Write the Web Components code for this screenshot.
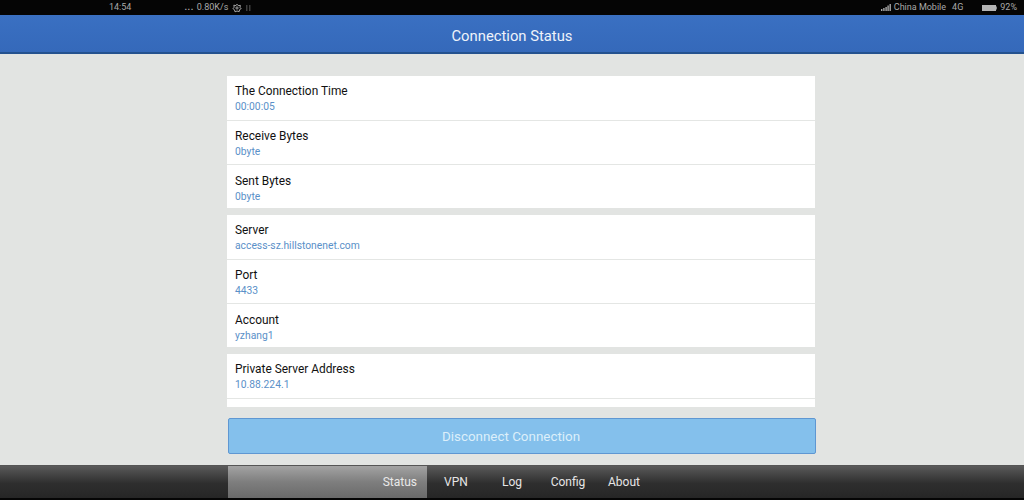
<!DOCTYPE html>
<html>
<head>
<meta charset="utf-8">
<title>Connection Status</title>
<style>
html, body { margin: 0; padding: 0; height: 500px; overflow: hidden; background: #e2e4e2; font-family: Roboto, "Liberation Sans", sans-serif; }
vpn-app { width: 1024px; height: 500px; }
</style>
</head>
<body>
<vpn-app>
  <status-bar></status-bar>
  <title-bar>Connection Status</title-bar>
  <main-pane>
    <info-group>
      <info-row label="The Connection Time" value="00:00:05"></info-row>
      <info-row label="Receive Bytes" value="0byte"></info-row>
      <info-row label="Sent Bytes" value="0byte"></info-row>
    </info-group>
    <info-group>
      <info-row label="Server" value="access-sz.hillstonenet.com"></info-row>
      <info-row label="Port" value="4433"></info-row>
      <info-row label="Account" value="yzhang1"></info-row>
    </info-group>
    <info-group>
      <info-row label="Private Server Address" value="10.88.224.1"></info-row>
      <info-row label="" value=""></info-row>
    </info-group>
    <big-button slot="action">Disconnect Connection</big-button>
  </main-pane>
  <tab-bar></tab-bar>
</vpn-app>
<script>
// app frame
class VpnApp extends HTMLElement {
  constructor() {
    super();
    this.attachShadow({mode: 'open'}).innerHTML = `<style>
      :host { display: flex; flex-direction: column; }
    </style><slot></slot>`;
  }
}
customElements.define('vpn-app', VpnApp);

class StatusBar extends HTMLElement {
  constructor() {
    super();
    this.attachShadow({mode: 'open'}).innerHTML = `<style>
      :host { display: flex; align-items: center; height: 15px; flex: none; background: #050505; color: #a9a9a9;
        font: 9px/15px Roboto, sans-serif; padding: 0 7px 0 109px; box-sizing: border-box; }
      .dots { margin-left: 53px; letter-spacing: 0.5px; font-weight: bold; }
      .speed { margin-left: 3px; }
      svg { display: block; flex: none; }
      .gear { margin-left: 4px; }
      .usb { margin-left: 4px; }
      .right { margin-left: auto; display: flex; align-items: center; }
      .carrier { margin-left: 3px; }
      .net { margin-left: 6px; }
      .batt { margin-left: 19px; }
      .pct { margin-left: 3px; }
    </style>
    <span>14:54</span>
    <span class="dots">...</span><span class="speed">0.80K/s</span>
    <svg class="gear" width="10" height="10" viewBox="0 0 10 10" fill="none" stroke="#a9a9a9" stroke-width="1"><path d="M5 1.2 6.2 2.6 8.4 2.4 8 4.4 9.2 5.6 7.6 6.6 7.2 8.6 5 8 3 8.8 2.5 6.8 .9 5.6 2.2 4.2 1.8 2.2 3.9 2.6Z"/><circle cx="5" cy="5" r="1.1"/></svg>
    <svg class="usb" width="5" height="8" viewBox="0 0 5 8" fill="#3d3d3d"><rect x="0" y="1" width="1.5" height="6"/><rect x="3" y="1" width="1.5" height="6"/></svg>
    <div class="right">
      <svg width="10" height="7" viewBox="0 0 10 7" fill="#a9a9a9"><rect x="0" y="5" width="1.4" height="2"/><rect x="2.2" y="4" width="1.4" height="3"/><rect x="4.4" y="3" width="1.4" height="4"/><rect x="6.4" y="1.5" width="1.4" height="5.5"/><rect x="8.5" y="0" width="1.4" height="7"/></svg>
      <span class="carrier">China Mobile</span><span class="net">4G</span>
      <svg class="batt" width="15" height="6" viewBox="0 0 15 6"><rect width="14" height="6" fill="#b4b4b4"/><rect x="14" y="1.5" width="1" height="3" fill="#888"/></svg>
      <span class="pct">92%</span>
    </div>`;
  }
}
customElements.define('status-bar', StatusBar);

class TitleBar extends HTMLElement {
  constructor() {
    super();
    this.attachShadow({mode: 'open'}).innerHTML = `<style>
      :host { display: flex; align-items: center; justify-content: center; flex: none; height: 39px; box-sizing: border-box;
        background: linear-gradient(#3a70c2, #3569ba); border-bottom: 2px solid #24528f; color: #eef3fa;
        font: 14.8px Roboto, sans-serif; padding-top: 4px; }
    </style><slot></slot>`;
  }
}
customElements.define('title-bar', TitleBar);

class MainPane extends HTMLElement {
  constructor() {
    super();
    this.attachShadow({mode: 'open'}).innerHTML = `<style>
      :host { display: flex; flex-direction: column; height: 411px; flex: none; box-sizing: border-box; padding: 22px 0 0 227px; background: #e2e4e2; }
      .scroll { width: 588px; height: 331px; flex: none; overflow: hidden; display: flex; flex-direction: column; gap: 7px; }
      .action { margin-top: 11px; }
    </style>
    <div class="scroll"><slot></slot></div>
    <div class="action"><slot name="action"></slot></div>`;
  }
}
customElements.define('main-pane', MainPane);

class InfoGroup extends HTMLElement {
  constructor() {
    super();
    this.attachShadow({mode: 'open'}).innerHTML = `<style>
      :host { display: flex; flex-direction: column; flex: none; background: #fff; }
    </style><slot></slot>`;
  }
}
customElements.define('info-group', InfoGroup);

class InfoRow extends HTMLElement {
  constructor() {
    super();
    const template = document.createElement('template');
    template.innerHTML = `<style>
      :host { display: flex; flex-direction: column; height: 45px; box-sizing: border-box; padding: 8px 8px 0; border-bottom: 1px solid #e4e6e4; }
      :host(:nth-child(2)) { height: 44px; padding-top: 8px; }
      :host(:nth-child(3)) { height: 43px; padding-top: 9px; }
      :host(:last-child) { border-bottom: none; }
      .label { font: 11.9px/15px Roboto, sans-serif; color: #111; }
      .value { font: 10.3px/13px Roboto, sans-serif; color: #5a90c8; margin-top: 1px; }
    </style><div class="label"></div><div class="value"></div>`;
    this.root = this.attachShadow({mode: 'open'});
    this.root.appendChild(template.content.cloneNode(true));
    this.root.querySelector('.label').textContent = this.getAttribute('label');
    this.root.querySelector('.value').textContent = this.getAttribute('value');
  }
}
customElements.define('info-row', InfoRow);

class BigButton extends HTMLElement {
  constructor() {
    super();
    this.attachShadow({mode: 'open'}).innerHTML = `<style>
      :host { display: flex; align-items: center; justify-content: center; width: 588px; height: 36px; margin-left: 1px; padding-right: 22px; box-sizing: border-box;
        background: #84c0ec; border: 1px solid #5f97d2; border-radius: 2px; color: #dceffa; font: 13.4px Roboto, sans-serif; }
    </style><slot></slot>`;
  }
}
customElements.define('big-button', BigButton);

class TabBar extends HTMLElement {
  constructor() {
    super();
    const tabs = ['VPN', 'Log', 'Config', 'About'];
    this.attachShadow({mode: 'open'}).innerHTML = `<style>
      :host { display: block; height: 35px; flex: none; box-sizing: border-box; background: #050505; }
      .bar { display: flex; height: 33px; box-sizing: border-box; border-top: 1px solid #555; padding-left: 228px;
        background: linear-gradient(#5a5a5a, #2e2e2e 55%, #262626); color: #e6e6e6; font: 12px/33px Roboto, sans-serif; }
      .active { width: 199px; flex: none; background: linear-gradient(#a3a3a3, #7e7e7e 50%, #6a6a6a); text-align: right; padding-right: 10px; box-sizing: border-box; color: #e9e9e9; }
      .tab { width: 56px; text-align: center; flex: none; padding-left: 1px; box-sizing: content-box; margin-right: -1px; }
    </style>
    <div class="bar">
      <div class="active">Status</div>
      ${tabs.map(t => `<div class="tab">${t}</div>`).join('')}
    </div>`;
  }
}
customElements.define('tab-bar', TabBar);
</script>
</body>
</html>
